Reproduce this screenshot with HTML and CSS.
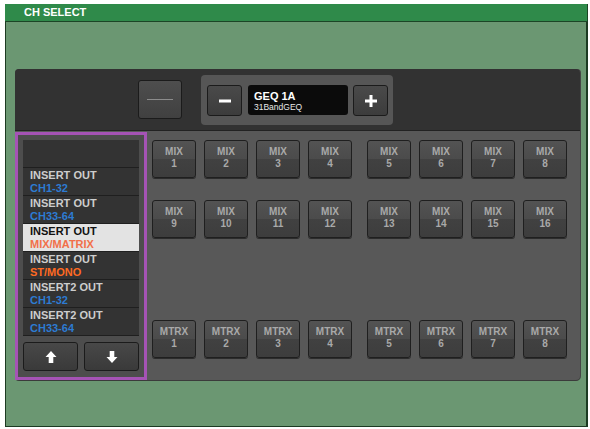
FILE: index.html
```html
<!DOCTYPE html>
<html lang="en">
<head>
    <meta charset="UTF-8">
    <title>CH SELECT</title>
    <link rel="stylesheet" href="styles.css">
</head>
<body>
    <div class="window">
        <div class="titlebar">CH SELECT</div>
        <div class="content">
            <div class="panel">
                <!-- Rack selection -->
                <div class="top">
                    <button class="blank"><span class="dash"></span></button>
                    <div class="geq">
                        <button class="step">
                            <svg width="14" height="14" viewBox="0 0 14 14"><rect x="1" y="5.5" width="12" height="3" fill="#fff"/></svg>
                        </button>
                        <div class="display">
                            <div class="name">GEQ 1A</div>
                            <div class="type">31BandGEQ</div>
                        </div>
                        <button class="step plus">
                            <svg width="14" height="14" viewBox="0 0 14 14"><rect x="1" y="5.5" width="12" height="3" fill="#fff"/><rect x="5.5" y="1" width="3" height="12" fill="#fff"/></svg>
                        </button>
                    </div>
                </div>

                <div class="lower">
                    <!-- Patch category list -->
                    <div class="picker">
                        <div class="list">
                            <div class="row"></div>
                            <div class="row"><span class="l1">INSERT OUT</span><span class="l2 blue">CH1-32</span></div>
                            <div class="row"><span class="l1">INSERT OUT</span><span class="l2 blue">CH33-64</span></div>
                            <div class="row selected"><span class="l1">INSERT OUT</span><span class="l2 orange">MIX/MATRIX</span></div>
                            <div class="row"><span class="l1">INSERT OUT</span><span class="l2 orange">ST/MONO</span></div>
                            <div class="row"><span class="l1">INSERT2 OUT</span><span class="l2 blue">CH1-32</span></div>
                            <div class="row"><span class="l1">INSERT2 OUT</span><span class="l2 blue">CH33-64</span></div>
                        </div>
                        <div class="arrows">
                            <button class="arrow">
                                <svg width="12" height="12" viewBox="0 0 12 12"><polygon points="6,0 11.5,6 8.3,6 8.3,12 3.7,12 3.7,6 0.5,6" fill="#fff"/></svg>
                            </button>
                            <button class="arrow">
                                <svg width="12" height="12" viewBox="0 0 12 12"><polygon points="6,12 11.5,6 8.3,6 8.3,0 3.7,0 3.7,6 0.5,6" fill="#fff"/></svg>
                            </button>
                        </div>
                    </div>

                    <!-- Channel buttons -->
                    <div class="grid">
                        <div class="bank">
                            <div class="group">
                                <button class="ch">MIX<br>1</button>
                                <button class="ch">MIX<br>2</button>
                                <button class="ch">MIX<br>3</button>
                                <button class="ch">MIX<br>4</button>
                            </div>
                            <div class="group">
                                <button class="ch">MIX<br>5</button>
                                <button class="ch">MIX<br>6</button>
                                <button class="ch">MIX<br>7</button>
                                <button class="ch">MIX<br>8</button>
                            </div>
                        </div>
                        <div class="bank second">
                            <div class="group">
                                <button class="ch">MIX<br>9</button>
                                <button class="ch">MIX<br>10</button>
                                <button class="ch">MIX<br>11</button>
                                <button class="ch">MIX<br>12</button>
                            </div>
                            <div class="group">
                                <button class="ch">MIX<br>13</button>
                                <button class="ch">MIX<br>14</button>
                                <button class="ch">MIX<br>15</button>
                                <button class="ch">MIX<br>16</button>
                            </div>
                        </div>
                        <div class="bank matrix">
                            <div class="group">
                                <button class="ch">MTRX<br>1</button>
                                <button class="ch">MTRX<br>2</button>
                                <button class="ch">MTRX<br>3</button>
                                <button class="ch">MTRX<br>4</button>
                            </div>
                            <div class="group">
                                <button class="ch">MTRX<br>5</button>
                                <button class="ch">MTRX<br>6</button>
                                <button class="ch">MTRX<br>7</button>
                                <button class="ch">MTRX<br>8</button>
                            </div>
                        </div>
                    </div>
                </div>
            </div>
        </div>
    </div>
</body>
</html>
```

FILE: styles.css
```css
* {
    margin: 0;
    padding: 0;
    box-sizing: border-box;
}

body {
    font-family: "Liberation Sans", Arial, sans-serif;
    background-color: #fff;
}

button {
    font-family: inherit;
    cursor: pointer;
}

.window {
    margin: 4px 0 0 5px;
    width: 583px;
    height: 423px;
    display: flex;
    flex-direction: column;
}

.titlebar {
    height: 18px;
    background-color: #2f8a4a;
    border-bottom: 1px solid #1c4526;
    border-right: 1px solid #1c4526;
    color: #fff;
    font-size: 11px;
    font-weight: bold;
    line-height: 17px;
    padding-left: 19px;
}

.content {
    flex: 1;
    background-color: #6b9772;
    border-left: 1px solid #1c3a22;
    border-right: 2px solid #1c3a22;
    border-bottom: 1px solid #1c3a22;
    padding: 47px 0 0 9px;
}

.panel {
    width: 565px;
    height: 311px;
    background-color: #585858;
    border-radius: 4px;
    box-shadow: 0 1px 0 #3b3b3b, 1px 0 0 #444;
    display: flex;
    flex-direction: column;
}

/* top strip */
.top {
    height: 64px;
    background-color: #323232;
    border-bottom: 1px solid #222;
    border-radius: 4px 4px 0 0;
    display: flex;
    align-items: flex-start;
}

.blank {
    margin: 11px 0 0 123px;
    width: 44px;
    height: 39px;
    border: 1px solid #1b1b1b;
    border-radius: 3px;
    background: linear-gradient(#4e4e4e, #404040);
    display: flex;
    align-items: center;
    justify-content: center;
}

.dash {
    width: 26px;
    height: 1px;
    background-color: #8c8c8c;
}

.geq {
    margin: 6px 0 0 19px;
    width: 192px;
    height: 50px;
    background-color: #565656;
    border-radius: 4px;
    display: flex;
    align-items: flex-start;
    padding: 10px 0 0 6px;
    gap: 6px;
}

.step {
    width: 35px;
    height: 31px;
    border: 1px solid #1b1b1b;
    border-radius: 3px;
    background: linear-gradient(#4a4a4a, #3c3c3c);
    display: flex;
    align-items: center;
    justify-content: center;
}

.step.plus {
    margin-left: -1px;
}

.display {
    width: 100px;
    height: 30px;
    background-color: #0b0b0b;
    border-radius: 3px;
    padding: 5px 0 0 6px;
    color: #fff;
}

.display .name {
    font-size: 11px;
    font-weight: bold;
    line-height: 12px;
}

.display .type {
    font-size: 8.5px;
    line-height: 11px;
    color: #e8e8e8;
}

/* lower area */
.lower {
    flex: 1;
    display: flex;
    align-items: flex-start;
}

.picker {
    margin-top: 1px;
    width: 132px;
    height: 248px;
    border: 3px solid #a553b5;
    background-color: #4d4d4d;
    padding: 5px 5px 6px 5px;
}

.list {
    background-color: #333;
}

.row {
    height: 28px;
    border-bottom: 1px solid #1f1f1f;
    padding: 1px 0 0 7px;
    display: flex;
    flex-direction: column;
    font-size: 11px;
    font-weight: bold;
    line-height: 13px;
}

.row .l1 {
    color: #cdcdcd;
}

.blue {
    color: #2d7bd2;
}

.orange {
    color: #ff6a22;
}

.row.selected {
    background-color: #e3e3e3;
}

.row.selected .l1 {
    color: #111;
}

.row.selected .orange {
    color: #f2704a;
}

.arrows {
    margin-top: 6px;
    display: flex;
    gap: 6px;
}

.arrow {
    width: 55px;
    height: 29px;
    border: 1px solid #1b1b1b;
    border-radius: 3px;
    background: linear-gradient(#484848, #3a3a3a);
    display: flex;
    align-items: center;
    justify-content: center;
}

.grid {
    margin-left: 5px;
    padding-top: 9px;
}

.bank {
    display: flex;
    gap: 15px;
}

.bank.second {
    margin-top: 22px;
}

.bank.matrix {
    margin-top: 82px;
}

.group {
    display: flex;
    gap: 8px;
}

.ch {
    width: 44px;
    height: 38px;
    border: 1px solid #1f1f1f;
    border-radius: 3px;
    background: linear-gradient(#535353 0, #4b4b4b 50%, #414141 50%, #3d3d3d 100%);
    box-shadow: 0 1px 0 #2c2c2c;
    color: #a9a9a9;
    font-size: 10px;
    font-weight: bold;
    line-height: 12.5px;
    padding-bottom: 2px;
}
```
